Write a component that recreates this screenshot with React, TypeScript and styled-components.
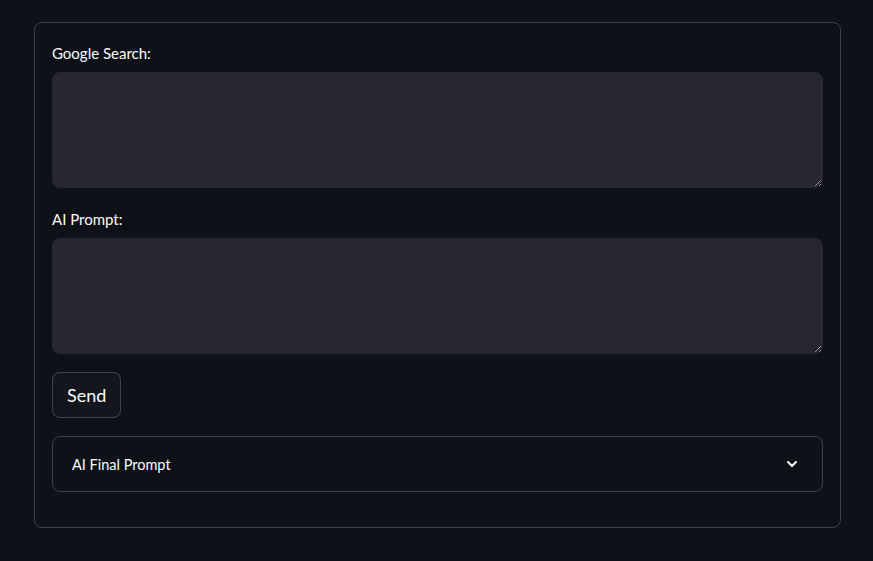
import React, { useState } from 'react';
import styled, { createGlobalStyle } from 'styled-components';

const GlobalStyle = createGlobalStyle`
  html, body {
    margin: 0;
    padding: 0;
    background: #0e1117;
    color: #fafafa;
    font-family: "Lato", "Noto Sans", sans-serif;
  }
`;

const Page = styled.main`
  padding: 22px 32px 33px 34px;
`;

const Panel = styled.section`
  border: 1px solid rgba(250, 250, 250, 0.2);
  border-radius: 8px;
  padding: 17px 17px 35px 17px;
  display: flex;
  flex-direction: column;
  gap: 18px;
`;

const Field = styled.div`
  display: flex;
  flex-direction: column;
`;

const Label = styled.label`
  font-size: 15px;
  line-height: 20px;
  padding-top: 3px;
  margin-bottom: 9px;
  color: #fafafa;
`;

const TextArea = styled.textarea`
  box-sizing: border-box;
  height: 116px;
  width: 100%;
  background: #262730;
  border: 1px solid #262730;
  border-radius: 8px;
  color: #fafafa;
  font-family: inherit;
  font-size: 14px;
  padding: 16px;
  resize: vertical;
  outline: none;
`;

const Button = styled.button`
  align-self: flex-start;
  height: 46px;
  padding: 0 14px;
  background: #13161d;
  border: 1px solid rgba(250, 250, 250, 0.2);
  border-radius: 8px;
  color: #fafafa;
  font-family: inherit;
  font-size: 18px;
  cursor: pointer;
`;

const Expander = styled.div`
  border: 1px solid rgba(250, 250, 250, 0.2);
  border-radius: 8px;
`;

const Summary = styled.div`
  height: 54px;
  display: flex;
  align-items: center;
  justify-content: space-between;
  padding: 0 22px 0 19px;
  font-size: 14.5px;
  cursor: pointer;
`;

const Body = styled.div`
  padding: 0 19px 16px;
  font-size: 14px;
`;

const App = () => {
  const [open, setOpen] = useState(false);

  return (
    <Page>
      <GlobalStyle />
      <Panel>
        <Field>
          <Label>Google Search:</Label>
          <TextArea />
        </Field>
        <Field>
          <Label>AI Prompt:</Label>
          <TextArea />
        </Field>
        <Button>Send</Button>
        <Expander>
          <Summary onClick={() => setOpen(!open)}>
            <span>AI Final Prompt</span>
            <svg width="16" height="16" viewBox="0 0 24 24" fill="none" stroke="#fafafa" strokeWidth="3" strokeLinecap="round" strokeLinejoin="round">
              <polyline points={open ? '6 15 12 9 18 15' : '6 9 12 15 18 9'} />
            </svg>
          </Summary>
          {open && <Body />}
        </Expander>
      </Panel>
    </Page>
  );
};

export default App;
